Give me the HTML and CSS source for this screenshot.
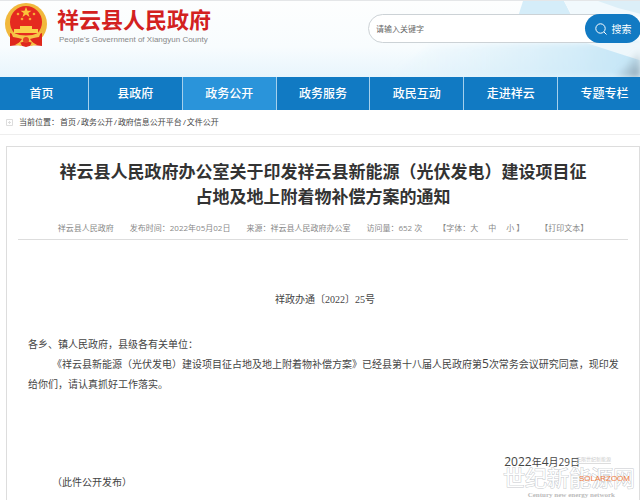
FILE: index.html
```html
<!DOCTYPE html>
<html lang="zh-CN">
<head>
    <meta charset="UTF-8" />
    <meta name="viewport" content="width=device-width, initial-scale=1.0" />
    <title>祥云县人民政府</title>
    <link rel="stylesheet" href="styles.css">
</head>
<body>
    <header class="header">
        <svg class="header-bg" viewBox="0 0 640 77" preserveAspectRatio="none" aria-hidden="true">
            <defs>
                <linearGradient id="sky" x1="0" x2="1" y1="0" y2="0">
                    <stop offset="0" stop-color="#d3edf9" stop-opacity="0" />
                    <stop offset="1" stop-color="#c3e5f6" />
                </linearGradient>
                <linearGradient id="shade" x1="0" x2="1" y1="0" y2="1">
                    <stop offset="0.4" stop-color="#8fa5b5" stop-opacity="0" />
                    <stop offset="1" stop-color="#8498a6" />
                </linearGradient>
                <filter id="soft"><feGaussianBlur stdDeviation="3" /></filter>
            </defs>
            <path d="M390 77L430 45L520 42H640V77Z" fill="url(#sky)" filter="url(#soft)" />
            <path d="M523 0H564L572 16H518Z" fill="#d5edf9" />
            <path d="M564 0H640V16H573Z" fill="#f1f9fd" />
            <path d="M598 0H640V13L618 7Z" fill="#dceff8" />
            <path d="M585 42H640V60L618 53Z" fill="#eef7fb" />
            <path d="M615 77L640 50V77Z" fill="url(#shade)" filter="url(#soft)" />
        </svg>
        <a class="brand" href="#">
            <svg class="emblem" viewBox="0 0 44 46" aria-hidden="true">
                <circle cx="22" cy="22" r="21" fill="#f1b83c" />
                <circle cx="22" cy="20" r="16" fill="#e52a20" />
                <path d="M22 5l1.500 3.700h4l-3.200 2.400 1.200 3.900-3.500-2.400-3.500 2.400 1.200-3.900-3.200-2.400h4z" fill="#fbc53a" />
                <g fill="#f6ad35">
                    <circle cx="14" cy="12" r="1.300" />
                    <circle cx="30" cy="12" r="1.300" />
                    <circle cx="18" cy="17" r="1.300" />
                    <circle cx="26" cy="17" r="1.300" />
                </g>
                <path d="M16 24h12v3h6v4H10v-4h6z" fill="#fbd04a" />
                <path d="M6 31l9 3h14l9-3v13l-9-1-7 2-7-2-9 1z" fill="#df271c" />
                <path d="M7 30q15 7 30 0l-2 5q-6 1-9 2l3 4-7-2-7 2 3-4q-3-1-9-2z" fill="#f6c447" />
                <circle cx="22" cy="38" r="3" fill="#e64523" />
                <path d="M11 43l5-3 2 4zM33 43l-5-3-2 4z" fill="#f6c447" />
            </svg>
            <span class="brand-text">
                <span class="brand-name">祥云县人民政府</span>
                <span class="brand-en">People's Government of Xiangyun County</span>
            </span>
        </a>
        <form class="search">
            <input class="search-input" type="text" placeholder="请输入关键字" aria-label="请输入关键字">
            <button class="search-btn" type="button">
                <svg class="search-icon" viewBox="0 0 12 12" aria-hidden="true">
                    <circle cx="5.500" cy="5.500" r="4.700" />
                    <path d="M9 9l2.500 2.500" />
                </svg>
                搜索
            </button>
        </form>
    </header>

    <nav class="nav">
        <ul class="nav-list">
            <li><a href="#">首页</a></li>
            <li><a href="#">县政府</a></li>
            <li><a class="active" href="#">政务公开</a></li>
            <li><a href="#">政务服务</a></li>
            <li><a href="#">政民互动</a></li>
            <li><a href="#">走进祥云</a></li>
            <li><a href="#">专题专栏</a></li>
        </ul>
    </nav>

    <div class="crumbs">
        <svg class="crumb-icon" viewBox="0 0 7 7" aria-hidden="true">
            <path d="M.5.500h6v6h-6zM2 3.500h3M3.500 2v3" />
        </svg>
        <span class="crumb-label">当前位置：</span>
        <a href="#">首页</a><span>/</span><a href="#">政务公开</a><span>/</span><a href="#">政府信息公开平台</a><span>/</span><a href="#">文件公开</a>
    </div>

    <main class="article">
        <h1>祥云县人民政府办公室关于印发祥云县新能源（光伏发电）建设项目征<br>占地及地上附着物补偿方案的通知</h1>
        <div class="meta">
            <span>祥云县人民政府</span>
            <span>发布时间：2022年05月02日</span>
            <span>来源：祥云县人民政府办公室</span>
            <span>访问量：652 次</span>
            <span class="font-size">【字体：<a href="#">大</a><a href="#">中</a><a href="#">小</a>】</span>
            <a href="#">【打印文本】</a>
        </div>
        <div class="content">
            <p class="doc-no">祥政办通〔2022〕25号</p>
            <p>各乡、镇人民政府，县级各有关单位：</p>
            <p class="indent">《祥云县新能源（光伏发电）建设项目征占地及地上附着物补偿方案》已经县第十八届人民政府第<span class="num">5</span>次常务会议研究同意，现印发给你们，请认真抓好工作落实。</p>
            <p class="date"><span class="num">2022</span>年<span class="num">4</span>月29日</p>
            <p class="note">（此件公开发布）</p>
        </div>
    </main>

    <div class="watermark">
        <span class="wm-top">无限世纪新能源</span>
        <span class="wm-name">世纪新能源网</span>
        <span class="wm-en">Century new energy network</span>
        <span class="wm-solar">SOLARZOOM</span>
    </div>
</body>
</html>
```
FILE: styles.css
```css
* {
    box-sizing: border-box;
}

html, body {
    height: 100%;
    margin: 0;
}

body {
    display: flex;
    flex-direction: column;
    position: relative;
    overflow: hidden;
    background: #fff;
    color: #444;
    font-family: "Open Sans", "Noto Sans CJK SC", sans-serif;
    font-size: 10px;
    line-height: 20px;
}

a {
    color: inherit;
    text-decoration: none;
}

/* header */
.header {
    display: flex;
    flex: none;
    justify-content: space-between;
    align-items: flex-start;
    position: relative;
    height: 77px;
    overflow: hidden;
    background: linear-gradient(#fdfefe, #f8fcfe 60%, #e8f5fc);
    border-top: 1px solid #e4e6e8;
}

.header-bg {
    position: absolute;
    top: 0;
    left: 0;
    width: 100%;
    height: 100%;
}

.brand, .search {
    position: relative;
}

.brand {
    display: flex;
    gap: 9px;
    padding: 1px 0 0 4px;
}

.emblem {
    width: 44px;
    height: 46px;
}

.brand-text {
    display: flex;
    flex-direction: column;
    padding-top: 4px;
}

.brand-name {
    color: #d3211f;
    font-size: 22px;
    font-weight: bold;
    line-height: 26px;
}

.brand-en {
    padding-left: 2px;
    color: #888;
    font-family: "Liberation Sans", Arial, sans-serif;
    font-size: 8px;
    line-height: 16px;
}

.search {
    display: flex;
    width: 273px;
    height: 29px;
    margin: 13px -1px 0 0;
    background: #fff;
    border: 1px solid #ccd2d6;
    border-radius: 15px;
}

.search-input {
    flex: 1;
    min-width: 0;
    padding: 0 7px;
    border: 0;
    outline: none;
    background: transparent;
    color: #555;
    font: inherit;
    font-size: 8px;
}

.search-input::placeholder {
    color: #666;
}

.search-btn {
    display: flex;
    align-items: center;
    justify-content: center;
    gap: 5px;
    width: 56px;
    margin: -1px;
    padding: 0;
    background: #117ac3;
    border: 0;
    border-radius: 15px;
    color: #fff;
    font: inherit;
}

.search-icon {
    width: 12px;
    height: 12px;
    fill: none;
    stroke: #fff;
}

/* nav */
.nav {
    flex: none;
    overflow: hidden;
    background: #117ac3;
}

.nav-list {
    display: flex;
    margin: 0 -12px 0 -5px;
    padding: 0;
    list-style: none;
}

.nav-list li {
    flex: 1;
    border-right: 1px solid #a5d0ec;
}

.nav-list a {
    display: block;
    color: #fff;
    font-size: 12px;
    font-weight: 500;
    line-height: 33px;
    text-align: center;
}

.nav-list .active {
    background: #2a94da;
}

/* breadcrumbs */
.crumbs {
    display: flex;
    flex: none;
    align-items: center;
    gap: 1px;
    height: 25px;
    padding-left: 6px;
    border-bottom: 1px solid #eee;
    font-size: 8px;
}

.crumb-icon {
    width: 7px;
    height: 7px;
    fill: none;
    stroke: #ddd;
}

.crumb-label {
    padding-left: 5px;
}

/* article */
.article {
    flex: 1;
    margin: 11px 0 0 6px;
    padding: 0 11px;
    border: 1px solid #ddd;
    border-bottom: 0;
}

h1 {
    margin: 0;
    padding-top: 12px;
    color: #333;
    font-size: 17px;
    line-height: 25px;
    text-align: center;
    white-space: nowrap;
}

.meta {
    display: flex;
    justify-content: center;
    gap: 16px;
    margin-top: 9px;
    padding-bottom: 1px;
    border-bottom: 1px solid #ddd;
    color: #888;
    font-size: 8px;
    white-space: nowrap;
}

.font-size a {
    margin-right: 10px;
}

.font-size a:last-child {
    margin-right: 2px;
}

.content {
    padding: 50px 6px 0 10px;
}

.content p {
    margin: 0;
}

.content .doc-no {
    margin-bottom: 24px;
    font-family: "Liberation Serif", "Noto Sans CJK SC", serif;
    text-align: center;
}

.indent {
    text-indent: 24px;
}

.num {
    font-size: 12px;
}

.content .date {
    margin-top: 58px;
    padding-right: 42px;
    text-align: right;
}

.content .note {
    padding-left: 24px;
}

/* site watermark over the page corner */
.watermark {
    display: flex;
    flex-direction: column;
    align-items: flex-end;
    position: absolute;
    right: 5px;
    bottom: 0;
    pointer-events: none;
}

.wm-top {
    margin-right: 24px;
    border-bottom: 1px solid #ddd;
    color: #ccc;
    font-size: 5px;
    line-height: 8px;
}

.wm-name {
    color: #fff;
    font-size: 22px;
    line-height: 26px;
    -webkit-text-stroke: 1px #c6c9cd;
    paint-order: stroke;
}

.wm-en {
    margin-right: 20px;
    color: #bbb;
    font-family: "Liberation Serif", serif;
    font-size: 7px;
    font-weight: bold;
    line-height: 10px;
}

.wm-solar {
    position: absolute;
    right: 5px;
    bottom: 15px;
    color: #ee7a3c;
    font-family: "Liberation Sans", Arial, sans-serif;
    font-size: 8px;
    line-height: 12px;
}
```
